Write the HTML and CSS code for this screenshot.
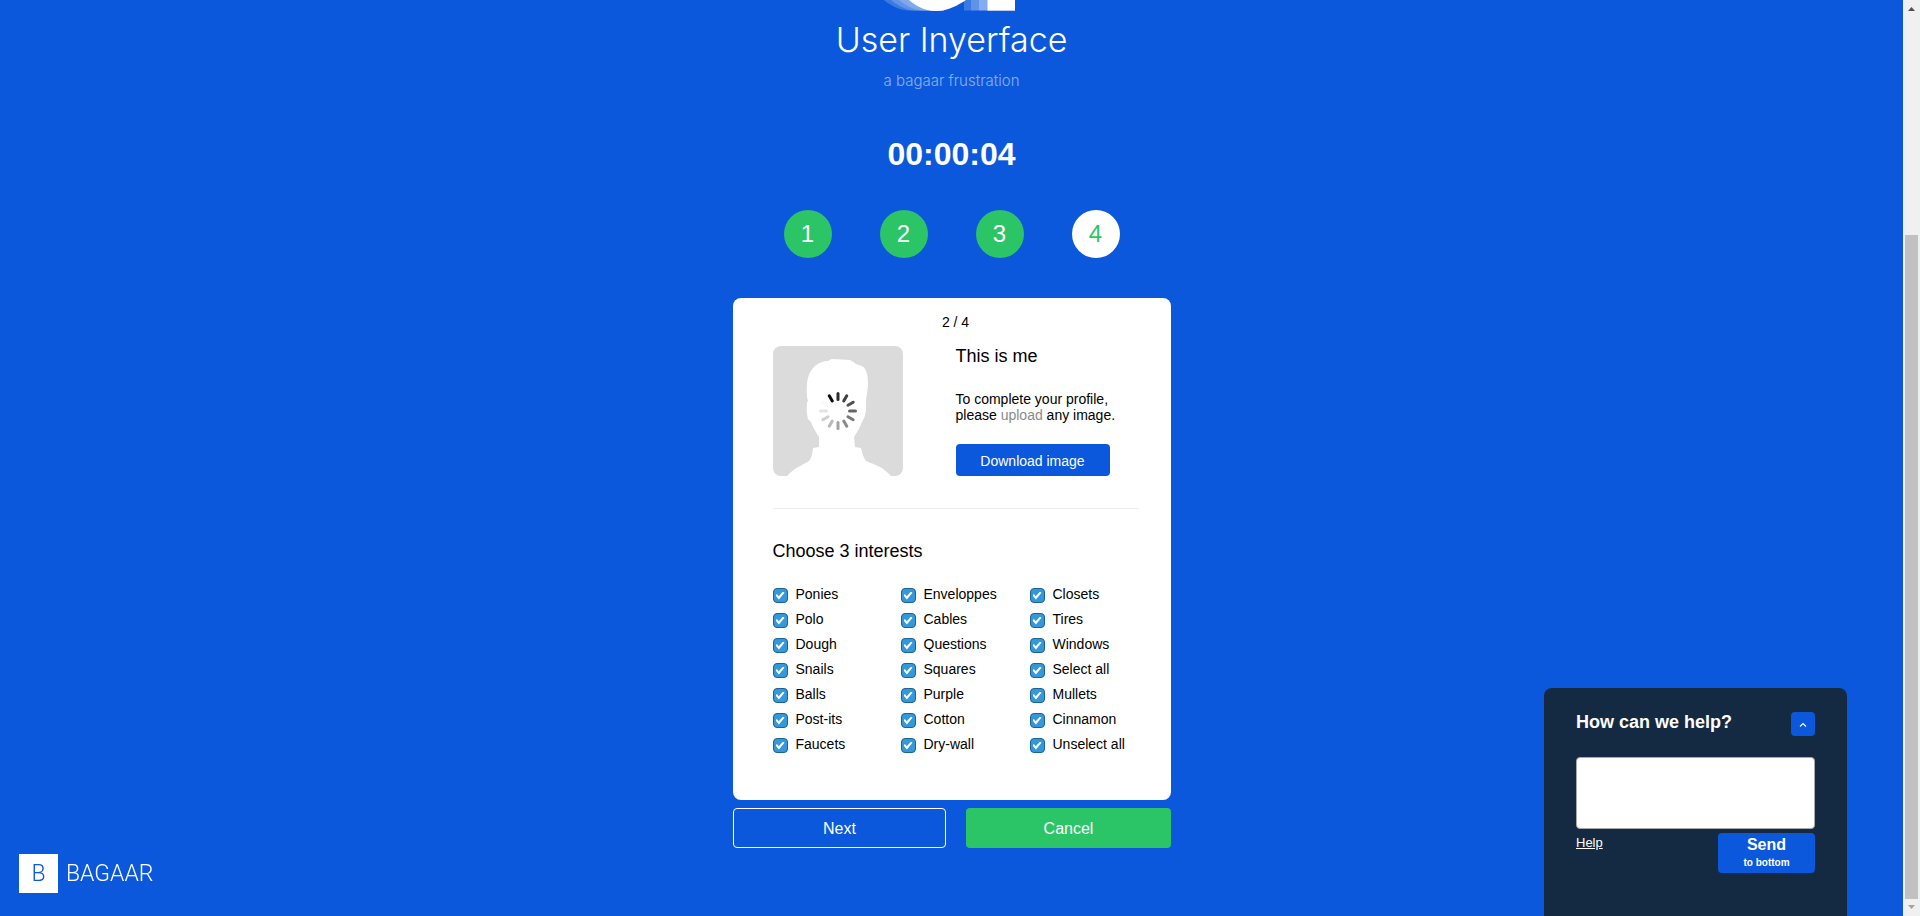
FILE: index.html
```html
<!DOCTYPE html>
<html lang="en">
<head>
<meta charset="utf-8">
<title>User Inyerface</title>
<link rel="stylesheet" href="styles.css">
</head>
<body>
<div class="page">
  <header class="brand">
    <svg class="brand-mark" width="140" height="11" viewBox="0 0 140 11" aria-hidden="true">
      <g fill="#fff">
        <path opacity=".2" d="M2 0C8 5 17 10.7 30 10.7H62V0z"/>
        <path opacity=".2" d="M9 0C15 5 24 10.7 37 10.7H62V0z"/>
        <path opacity=".2" d="M17 0C23 5 32 10.7 45 10.7H62V0z"/>
        <path d="M27 0C33 5 41 10.9 54 10.9S76 5 84 0z"/>
        <path opacity=".2" d="M82 0h7v10.500h-7z"/><path opacity=".35" d="M89 0h8v10.500h-8z"/><path opacity=".5" d="M97 0h9v10.500h-9z"/>
        <path d="M105.500 0H133v10.700h-27.500z"/>
      </g>
    </svg>
    <h1 class="brand-name">User Inyerface</h1>
    <p class="tagline">a bagaar frustration</p>
  </header>
  <main class="game">
    <div class="timer">00:00:04</div>
    <ol class="steps">
      <li class="step">1</li><li class="step">2</li><li class="step">3</li><li class="step step-current">4</li>
    </ol>
    <form class="form">
      <section class="card">
        <div class="count">2 / 4</div>
        <div class="profile">
          <svg class="avatar" viewBox="0 0 130 130" role="img" aria-label="Profile picture">
            <path fill="#dbdbdb" d="M0 0h130v130H0z"/>
            <path fill="#fff" d="M14 130C22 121 30 119 36 115Q39 112 40 102L46 101V91Q40 82 38 76L35 73Q33 64 34 59Q33 57 35 55L34 51C33 35 35 26 42 20Q48 15 55 15Q57 13 60 13L77 14Q81 16 83 18L89 20C94 23 95 30 95 40Q94 47 93 54Q94 68 90 74L89 76Q86 84 81 91L82 101L88 102Q90 111 93 115C103 119 110 121 118 130z"/>
            <g class="spinner" stroke="#000" stroke-width="3" stroke-linecap="round"></g>
          </svg>
          <div class="profile-text">
            <h2 class="heading">This is me</h2>
            <p class="hint">To complete your profile,<br>please <a class="upload" href="#upload">upload</a> any image.</p>
            <button class="download" type="button">Download image</button>
          </div>
        </div>
        <hr class="rule">
        <h2 class="heading">Choose 3 interests</h2>
        <div class="interests"></div>
      </section>
      <div class="actions">
        <button class="next" type="button">Next</button>
        <button class="cancel" type="button">Cancel</button>
      </div>
    </form>
  </main>
  <a class="bagaar" href="#bagaar"><span class="bagaar-box">B</span><span class="bagaar-word">BAGAAR</span></a>
  <aside class="help">
    <div class="help-head">
      <h2 class="help-title">How can we help?</h2>
      <button class="help-up" type="button" aria-label="Move up"><svg width="8" height="6" viewBox="0 0 8 6"><path d="M1 4.500 4 1.500 7 4.500" fill="none" stroke="#fff" stroke-width="1.100"/></svg></button>
    </div>
    <textarea class="help-box" aria-label="Your question"></textarea>
    <div class="help-foot">
      <a class="help-link" href="#help">Help</a>
      <button class="send" type="button">Send<span class="send-note">to bottom</span></button>
    </div>
  </aside>
</div>
<div class="scrollbar" aria-hidden="true">
  <svg width="7" height="4" viewBox="0 0 7 4"><path d="M0 4 3.500 0 7 4z" fill="#505050"/></svg>
  <div class="thumb"></div>
  <svg width="7" height="4" viewBox="0 0 7 4"><path d="M0 0 3.500 4 7 0z" fill="#a3a3a3"/></svg>
</div>
<script src="app.js"></script>
</body>
</html>
```
FILE: styles.css
```css
* { box-sizing: border-box; }
body { margin: 0; display: flex; min-height: 100vh; background: #0b58dc; color: #000; font: 14px/16px "Liberation Sans", Arial, sans-serif; }
button { font: inherit; border: 0; padding: 0; cursor: pointer; }
h1, h2, p, ol { margin: 0; padding: 0; font-weight: 400; }
.page { flex: 1; }
.brand { display: flex; flex-direction: column; align-items: center; color: #fff; font-feature-settings: "cv11"; }
.brand-name { font: 300 34px/40px "Inter", sans-serif; margin-top: 9px; }
.tagline { font: 300 15px/20px "Inter", sans-serif; margin-top: 11px; opacity: .5; }
.game { display: flex; flex-direction: column; align-items: center; }
.timer { margin-top: 45px; font-size: 32px; font-weight: 700; line-height: 36px; color: #fff; }
.steps { display: flex; gap: 48px; margin-top: 38px; list-style: none; }
.step { width: 48px; height: 48px; border-radius: 50%; background: #2bc567; color: #fff; font-size: 24px; line-height: 48px; text-align: center; }
.step-current { background: #fff; color: #2bc567; }
.form { width: 438px; max-width: 100%; margin-top: 40px; }
.card { background: #fff; border-radius: 8px; padding: 16px 32px 48px 40px; }
.count { text-align: center; }
.profile { display: grid; grid-template-columns: 1fr 1fr; margin-top: 16px; }
.avatar { width: 130px; height: 130px; border-radius: 8px; display: block; }
.heading { font-size: 18px; line-height: 20px; }
.hint { margin: 25px 0 21px; }
.upload { color: #8a8a8a; text-decoration: none; }
.download { width: 154px; height: 32px; border-radius: 4px; background: #0b58dc; color: #fff; padding-top: 2px; }
.rule { border: 0; border-top: 1px solid #ededed; margin: 32px 0; }
.interests { display: grid; grid-template-columns: 128px 129px 1fr; row-gap: 9px; margin-top: 25px; }
.interest { display: flex; gap: 8px; height: 16px; }
.check { appearance: none; flex: none; width: 15px; height: 15px; margin: 2px 0 0; border: 1px solid #1d6391; border-radius: 4px; background: #3498db; display: grid; place-items: center; }
.check:checked::before { content: ""; width: 9px; height: 8px; background: #fff; clip-path: polygon(0 50%, 15% 32%, 36% 58%, 84% 0, 100% 15%, 38% 100%); }
.actions { display: flex; gap: 20px; margin-top: 8px; font-size: 16px; color: #fff; }
.next, .cancel { height: 40px; border-radius: 4px; color: #fff; padding-top: 2px; }
.next { flex: 213; background: transparent; border: 1px solid #fff; }
.cancel { flex: 205; background: #2bc567; }
.bagaar { position: fixed; left: 19px; bottom: 23px; display: flex; align-items: center; gap: 8px; color: #fff; text-decoration: none; font: 300 23px/39px "Roboto", sans-serif; }
.bagaar-box { width: 39px; height: 39px; background: #fff; color: #0b58dc; text-align: center; }
.help { position: fixed; right: 73px; bottom: 0; width: 303px; padding: 24px 32px 43px; border-radius: 8px 8px 0 0; background: #142a42; color: #fff; }
.help-head { display: flex; justify-content: space-between; }
.help-title { font-size: 18px; font-weight: 700; line-height: 20px; }
.help-up { display: grid; place-items: center; width: 24px; height: 24px; border-radius: 4px; background: #0b58dc; padding-top: 2px; }
.help-box { display: block; width: 100%; height: 72px; margin-top: 21px; border: 1px solid #a9a9a9; border-radius: 4px; background: #fff; resize: none; }
.help-foot { display: flex; justify-content: space-between; align-items: flex-start; margin-top: 4px; }
.help-link { color: #fff; font-size: 13px; line-height: 20px; }
.send { width: 97px; height: 40px; border-radius: 4px; background: #0b58dc; color: #fff; font-size: 16px; font-weight: 700; line-height: 20px; }
.send-note { display: block; font-size: 10px; line-height: 16px; }
.scrollbar { width: 17px; display: flex; flex-direction: column; align-items: center; background: #f0f0f0; padding: 7px 0; }
.thumb { width: 13px; margin: 224px 0 6px; flex: 1; background: #c1c1c1; }
```
FILE: app.js
```js
const names = ["Ponies", "Enveloppes", "Closets", "Polo", "Cables", "Tires", "Dough", "Questions", "Windows",
  "Snails", "Squares", "Select all", "Balls", "Purple", "Mullets", "Post-its", "Cotton", "Cinnamon",
  "Faucets", "Dry-wall", "Unselect all"];
document.querySelector(".interests").innerHTML = names.map(name =>
  `<label class="interest"><input class="check" type="checkbox" checked><span>${name}</span></label>`).join("");

const shades = [0.82, 0.75, 0.68, 0.6, 0.52, 0.46, 0.36, 0.27, 0.18, 0.1, 0.02, 0.95];
document.querySelector(".spinner").innerHTML = shades.map((shade, i) =>
  `<path d="M65 47.500v6" opacity="${shade}" transform="rotate(${i * 30} 65 65)"/>`).join("");
```
